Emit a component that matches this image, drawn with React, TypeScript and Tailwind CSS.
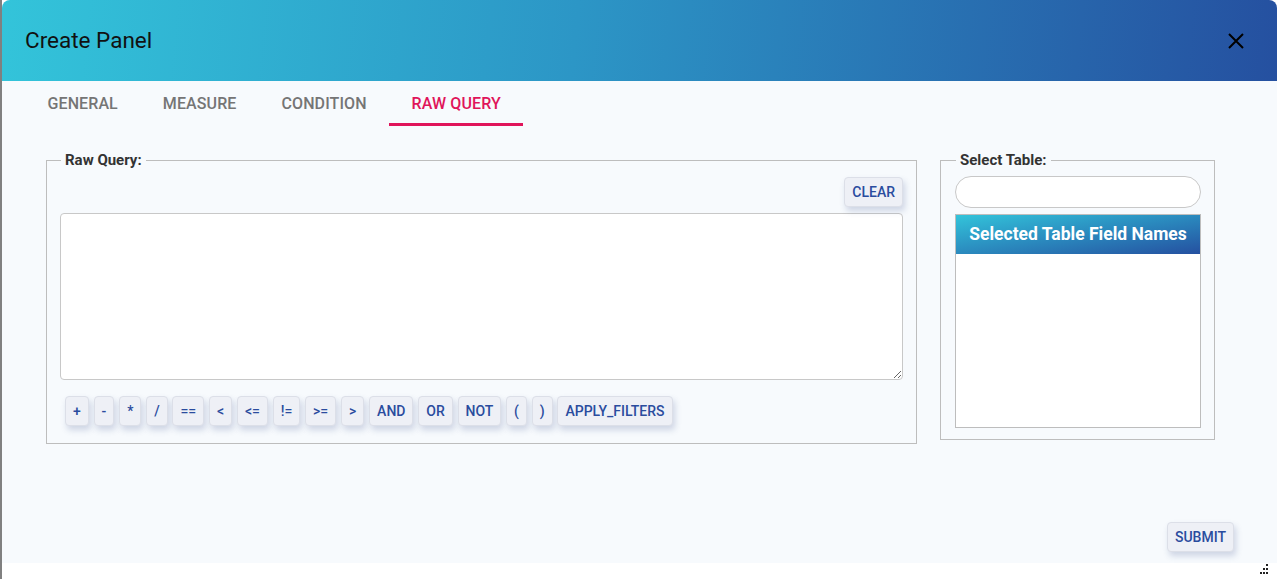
import React, { useState } from "react";

const ops = ["+", "-", "*", "/", "==", "<", "<=", "!=", ">=", ">", "AND", "OR", "NOT", "(", ")", "APPLY_FILTERS"];
const tabs = ["GENERAL", "MEASURE", "CONDITION", "RAW QUERY"];

function SoftButton({ label, onClick }: { label: string; onClick?: () => void }) {
  return (
    <button
      onClick={onClick}
      className="h-[30px] min-w-[20px] px-[7px] rounded-[4px] border border-[#dcdfe8] bg-[#eef0f6] text-[14px] font-medium text-[#2a4c9e] shadow-[2px_4px_6px_rgba(60,80,140,0.22)]"
    >
      {label}
    </button>
  );
}

export default function App() {
  const [tab, setTab] = useState(3);
  const [query, setQuery] = useState("");

  return (
    <div className="flex h-[579px] w-full bg-white font-['Roboto',sans-serif]">
      <div className="w-[2px] bg-[#808080]" />
      <div className="relative flex h-[563px] flex-1 flex-col overflow-hidden rounded-tl-[8px] rounded-tr-[8px] bg-[#f7fafd]">
        {/* header */}
        <div className="flex h-[81px] items-center justify-between bg-[linear-gradient(96deg,#33c4da,#2c96c6_45%,#2550a0)] pl-[23px] pr-[32px]">
          <h2 className="text-[22.5px] text-[#111]">Create Panel</h2>
          <svg width="18" height="18" viewBox="0 0 18 18" className="text-black">
            <path d="M2 2 L16 16 M16 2 L2 16" stroke="currentColor" strokeWidth="2" />
          </svg>
        </div>

        {/* tabs */}
        <div className="flex h-[45px] pl-[23px]">
          {tabs.map((t, i) => (
            <button
              key={t}
              onClick={() => setTab(i)}
              className={
                "relative px-[22.5px] text-[16px] font-medium tracking-[0.1px] " +
                (tab === i ? "text-[#e0145a]" : "text-[#757575]")
              }
            >
              {t}
              {tab === i && <span className="absolute bottom-0 left-0 right-0 h-[3px] bg-[#e0145a]" />}
            </button>
          ))}
        </div>

        {/* body */}
        <div className="mt-[24px] flex items-start pl-[44px]">
          <fieldset className="h-[294px] w-[871px] border border-[#bdbdbd] px-[13px] pb-[16px]">
            <legend className="ml-[1px] px-[4px] text-[15px] font-bold leading-[20px] text-[#333]">Raw Query:</legend>
            <div className="mt-[7px] flex justify-end">
              <SoftButton label="CLEAR" onClick={() => setQuery("")} />
            </div>
            <textarea
              value={query}
              onChange={(e) => setQuery(e.target.value)}
              className="mt-[6px] block h-[167px] w-full rounded-[4px] border border-[#c8c8c8] bg-white p-2 text-[14px] outline-none"
            />
            <div className="ml-[5px] mt-[16px] flex gap-[4.8px]">
              {ops.map((o) => (
                <SoftButton key={o} label={o} onClick={() => setQuery(query + (query ? " " : "") + o)} />
              ))}
            </div>
          </fieldset>

          <fieldset className="ml-[23px] h-[290px] w-[275px] border border-[#bdbdbd] pl-[14px] pr-[13px]">
            <legend className="ml-[1px] px-[4px] text-[15px] font-bold leading-[20px] text-[#333]">Select Table:</legend>
            <input className="mt-[6px] block h-[32px] w-full rounded-full border border-[#c8c8c8] bg-white px-3 text-[14px] outline-none" />
            <div className="mt-[6px] h-[214px] border border-[#bdbdbd] bg-white">
              <div className="flex h-[39px] items-center justify-center bg-gradient-to-br from-[#33c4da] to-[#2550a0] text-[17.5px] font-bold text-white">
                Selected Table Field Names
              </div>
            </div>
          </fieldset>
        </div>

        <div className="mt-auto flex justify-end pb-[11px] pr-[43px]">
          <SoftButton label="SUBMIT" />
        </div>
      </div>
      <svg className="absolute left-[1258px] top-[564px]" width="12" height="12" viewBox="0 0 12 12">
        <g fill="#222">
          <rect x="8" y="0" width="2" height="2" />
          <rect x="5" y="4" width="2" height="2" />
          <rect x="8" y="4" width="2" height="2" />
          <rect x="2" y="8" width="2" height="2" />
          <rect x="5" y="8" width="2" height="2" />
          <rect x="8" y="8" width="2" height="2" />
        </g>
      </svg>
    </div>
  );
}
